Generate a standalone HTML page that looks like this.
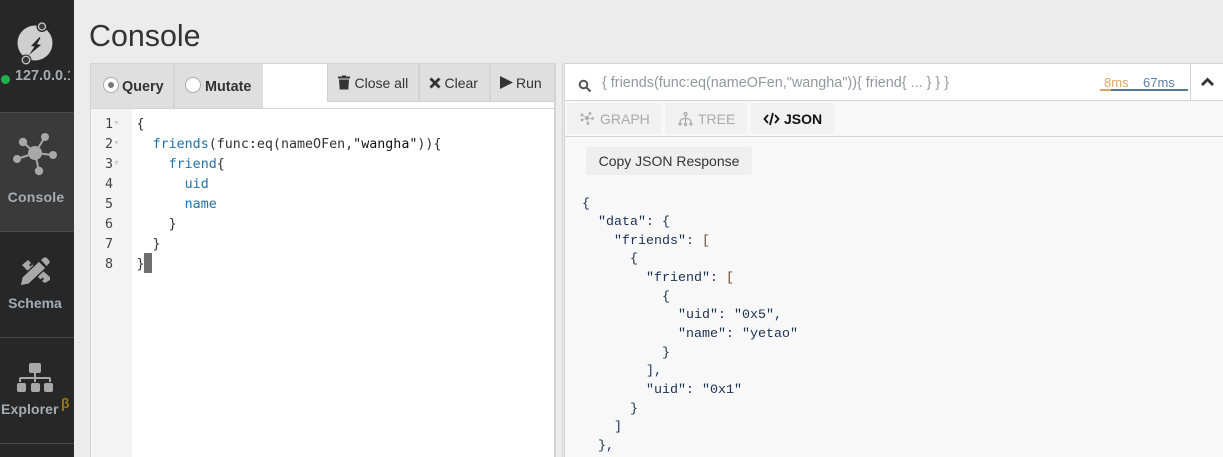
<!DOCTYPE html>
<html><head><meta charset="utf-8"><style>
html,body{margin:0;padding:0;width:1223px;height:457px;overflow:hidden;background:#ececec;font-family:"Liberation Sans",sans-serif}
div,span,svg{position:absolute;box-sizing:border-box;white-space:pre}
span.i{position:static}
.nav{left:0;width:74px;background:#272727;border-bottom:1px solid #4a4a4a}
.lbl{left:-1px;width:74px;text-align:center;font-weight:bold;font-size:14px;color:#a4acb4}
.btn{background:#dfdfdf;top:64px;height:37px;color:#333;font-size:14px;line-height:38px}
.code{font-family:"DejaVu Sans Mono",monospace;font-size:13.33px;line-height:20px;color:#333;left:136.500px;top:115px}
.b{color:#1f72ad}.k{color:#111}
.gut{left:101px;width:12px;font-family:"DejaVu Sans Mono",monospace;font-size:13.33px;line-height:20px;color:#444;text-align:right;top:115px}
.json{font-family:"Liberation Mono",monospace;font-size:13.33px;line-height:18.65px;left:582px;top:195.500px;color:#1b3050}
.tab{top:103px;height:31px;background:#f1f1f1;border-radius:2px;font-size:14px;line-height:33px;color:#aaa}
</style></head><body>
<div style="left:0;top:0;width:74px;height:457px;background:#272727"></div>
<svg style="left:14px;top:20px" width="44" height="46" viewBox="0 0 44 46"><circle cx="21" cy="23" r="17.500" fill="#cfcfcf"/><circle cx="28" cy="6.500" r="5.500" fill="#272727"/><circle cx="12" cy="40" r="5.500" fill="#272727"/><circle cx="28" cy="6.500" r="3.500" fill="#3a3a3a" stroke="#c8c8c8" stroke-width="1.300"/><circle cx="12" cy="40" r="3.800" fill="#3a3a3a" stroke="#c8c8c8" stroke-width="1.300"/><path d="M25.500 17 L17 26 L20.500 26.500 L15 35 L27 25 L23 24 L26.500 18Z" fill="#272727"/></svg>
<div style="left:1px;top:75px;width:9px;height:9px;border-radius:50%;background:#20b14c"></div>
<div style="left:15px;top:68px;width:55px;overflow:hidden;font-size:14.4px;font-weight:bold;color:#a4acb4">127.0.0.1</div>
<div class="nav" style="top:112px;height:120px;background:#3a3a3a;border-top:1px solid #4a4a4a;border-bottom:1px solid #4a4a4a"></div>
<svg style="left:12px;top:132px" width="46" height="44" viewBox="0 0 46 44" stroke="#a8a8a8" stroke-width="2" fill="#a8a8a8"><path d="M23 21 L33 5M23 21L11 10M23 21L41 23M23 21L5 27M23 21L27 39"/><circle cx="23" cy="21" r="7" stroke="none"/><circle cx="33" cy="5" r="4" stroke="none"/><circle cx="11" cy="10" r="4.200" stroke="none"/><circle cx="41" cy="23" r="4" stroke="none"/><circle cx="5" cy="27" r="4" stroke="none"/><circle cx="27" cy="39" r="4.200" stroke="none"/></svg>
<div class="lbl" style="top:189px;letter-spacing:.2px">Console</div>
<div class="nav" style="top:232px;height:106px"></div>
<svg style="left:20px;top:256px" width="31" height="32" viewBox="0 0 31 32" fill="#a8a8a8"><path d="M2 9 L8 4 L11 7 L9 9 L10.500 10.500 L12.500 8.500 L15 11 L11 15 L9 16Z"/><path d="M19 19 L23 15 L30 21 L30 24 L25 27 L22 25 L24 23 L22.500 21.500 L20.500 23.500 L18 21Z"/><path d="M0 30 L2 21 L19 5 L26 12 L9 28Z" stroke="#272727" stroke-width="1.500"/><path d="M1 29 L3 21.500 L19 6 L25 12 L8.500 27.500Z"/><path d="M21 4 L24 1.500 Q25.500 1 27 2 L29.500 5 Q30 6.500 29 7.500 L26.500 10Z"/></svg>
<div class="lbl" style="top:295px;left:-2px">Schema</div>
<div class="nav" style="top:338px;height:106px"></div>
<svg style="left:16px;top:361px" width="38" height="36" viewBox="0 0 38 36" fill="#a8a8a8"><rect x="13" y="2" width="12" height="10" rx="2"/><rect x="1" y="22" width="9" height="9" rx="2"/><rect x="15" y="22" width="9" height="9" rx="2"/><rect x="28" y="22" width="9" height="9" rx="2"/><path d="M18 12h2v4h13q2 0 2 2v3h-2v-3H20v3h-2v-3H5v3H3v-3q0-2 2-2h13z"/></svg>
<div class="lbl" style="top:401px;left:1px;width:58px;letter-spacing:.1px;text-align:left">Explorer</div>
<div style="left:61px;top:395px;font-size:14px;font-weight:bold;color:#9a7a10">β</div>

<div style="left:89px;top:18px;font-size:30.400px;line-height:36px;color:#333">Console</div>

<div style="left:90px;top:63px;width:465px;height:394px;background:#fff;border:1px solid #d4d4d4;border-bottom:0"></div>
<div style="left:91px;top:64px;width:172px;height:44px;background:#dfdfdf"></div>
<div style="left:173px;top:64px;width:2px;height:44px;background:#d2d2d2"></div>
<div style="left:91px;top:108px;width:463px;height:1px;background:#d4d4d4"></div>
<div style="left:103px;top:77px;width:16px;height:16px;border-radius:50%;background:#fff;border:1px solid #aaa"></div>
<div style="left:108px;top:82px;width:6px;height:6px;border-radius:50%;background:#777"></div>
<div style="left:122px;top:79px;font-size:14.400px;font-weight:bold;color:#333">Query</div>
<div style="left:185px;top:77px;width:16px;height:16px;border-radius:50%;background:#fff;border:1px solid #aaa"></div>
<div style="left:205px;top:79px;font-size:14.400px;font-weight:bold;color:#333">Mutate</div>

<div class="btn" style="left:327px;width:91px;padding-left:26.500px;border-left:1px solid #d2d2d2">Close all</div>
<div class="btn" style="left:418px;width:71px;padding-left:24.500px;border-left:2px solid #d2d2d2">Clear</div>
<div class="btn" style="left:489px;width:65px;padding-left:25px;border-left:2px solid #d2d2d2">Run</div>
<div style="left:327px;top:101px;width:227px;height:1px;background:#d2d2d2"></div>
<svg style="left:337px;top:75px" width="14" height="15" viewBox="0 0 14 15" fill="#333"><path d="M1 1.500h4V.5h4v1h4v2H1zM2 4.500h10l-.7 10H2.700z"/></svg>
<svg style="left:429px;top:77px" width="12" height="12" viewBox="0 0 12 12" stroke="#333" stroke-width="2.800" fill="none"><path d="M1.500 1.500L10.500 10.500M10.500 1.500L1.500 10.500"/></svg>
<svg style="left:500px;top:75px" width="13" height="15" viewBox="0 0 13 15" fill="#333"><path d="M0 1L13 7.500L0 14Z"/></svg>

<div style="left:91px;top:109px;width:41px;height:348px;background:#f4f4f4"></div>
<div class="gut">1
2
3
4
5
6
7
8</div>
<div style="left:113px;top:114px;font-size:7px;color:#ccc;line-height:20px">▼
▼
▼</div>
<div class="code">{
  <span class="i b">friends</span>(func:eq(nameOFen,<span class="i k">"wangha"</span>)){
    <span class="i b">friend</span>{
      <span class="i b">uid</span>
      <span class="i b">name</span>
    }
  }
}</div>
<div style="left:144px;top:253px;width:8px;height:20px;background:#6f6f6f"></div>

<div style="left:555px;top:62px;width:8px;height:395px;background:#ececec;border-left:1px solid #d4d4d4;border-right:1px solid #d4d4d4"></div>
<div style="left:564px;top:63px;width:659px;height:394px;background:#f8f8f8;border-left:1px solid #d4d4d4;border-top:1px solid #d4d4d4"></div>
<div style="left:565px;top:64px;width:658px;height:37px;background:#fff;border-bottom:1px solid #d4d4d4"></div>
<svg style="left:578px;top:79px" width="14" height="14" viewBox="0 0 14 14" fill="none" stroke="#555" stroke-width="2"><circle cx="5.500" cy="5.500" r="3.800"/><path d="M8.500 8.500L12.500 12.500"/></svg>
<div style="left:602px;top:75px;font-size:14.400px;color:#93989f">{ friends(func:eq(nameOFen,"wangha")){ friend{ ... } } }</div>
<div style="left:1104px;top:75px;font-size:13px;color:#dba863">8ms</div>
<div style="left:1143px;top:75px;font-size:13px;color:#5b80a8">67ms</div>
<div style="left:1100px;top:89px;width:11px;height:2px;background:#d9a765"></div>
<div style="left:1111px;top:89px;width:77px;height:2px;background:#567a9c"></div>
<div style="left:1190px;top:64px;width:1px;height:36px;background:#d4d4d4"></div>
<svg style="left:1201px;top:77px" width="13" height="10" viewBox="0 0 13 10" fill="none" stroke="#333" stroke-width="2.800"><path d="M1 8L6.500 2.500L12 8"/></svg>

<div class="tab" style="left:567px;width:94px;padding-left:33px">GRAPH</div>
<svg style="left:580px;top:112px" width="14" height="13" viewBox="0 0 14 13" fill="#aaa" stroke="#aaa" stroke-width=".7"><path d="M7 6L10 1.500M7 6L2 3M7 6L12.500 6.500M7 6L2 8M7 6L8 11.500" stroke-width=".6"/><circle cx="7" cy="6" r="1.500"/><circle cx="10" cy="1.500" r="1"/><circle cx="2" cy="3" r="1"/><circle cx="12.500" cy="6.500" r="1"/><circle cx="2" cy="8" r="1"/><circle cx="8" cy="11.500" r="1"/></svg>
<div class="tab" style="left:665px;width:82px;padding-left:33px">TREE</div>
<svg style="left:678px;top:112px" width="15" height="14" viewBox="0 0 15 14" fill="none" stroke="#aaa" stroke-width="1.200"><circle cx="7.500" cy="2" r="1.500"/><path d="M7.500 3.500V12M7.500 6.500C3 6.500 2 8 2 11M7.500 6.500C12 6.500 13 8 13 11"/><circle cx="2" cy="12" r="1"/><circle cx="7.500" cy="12.500" r="1"/><circle cx="13" cy="12" r="1"/></svg>
<div class="tab" style="left:751px;width:83px;padding-left:33px;color:#111;font-weight:bold">JSON</div>
<svg style="left:763px;top:112px" width="17" height="14" viewBox="0 0 17 14" fill="none" stroke="#111" stroke-width="1.800"><path d="M5 3L1.500 7L5 11M12 3L15.500 7L12 11M10 1L7 13"/></svg>
<div style="left:565px;top:136px;width:658px;height:1px;background:#d4d4d4"></div>

<div style="left:586px;top:147px;width:166px;height:28px;background:#efefef;border-radius:2px;text-align:center;font-size:14px;line-height:28px;color:#333">Copy JSON Response</div>
<div class="json">{
  "data": {
    "friends": <span class="i" style="color:#6a4a30">[</span>
      {
        "friend": <span class="i" style="color:#6a4a30">[</span>
          {
            "uid": "0x5",
            "name": "yetao"
          }
        ],
        "uid": "0x1"
      }
    ]
  },</div>
</body></html>
